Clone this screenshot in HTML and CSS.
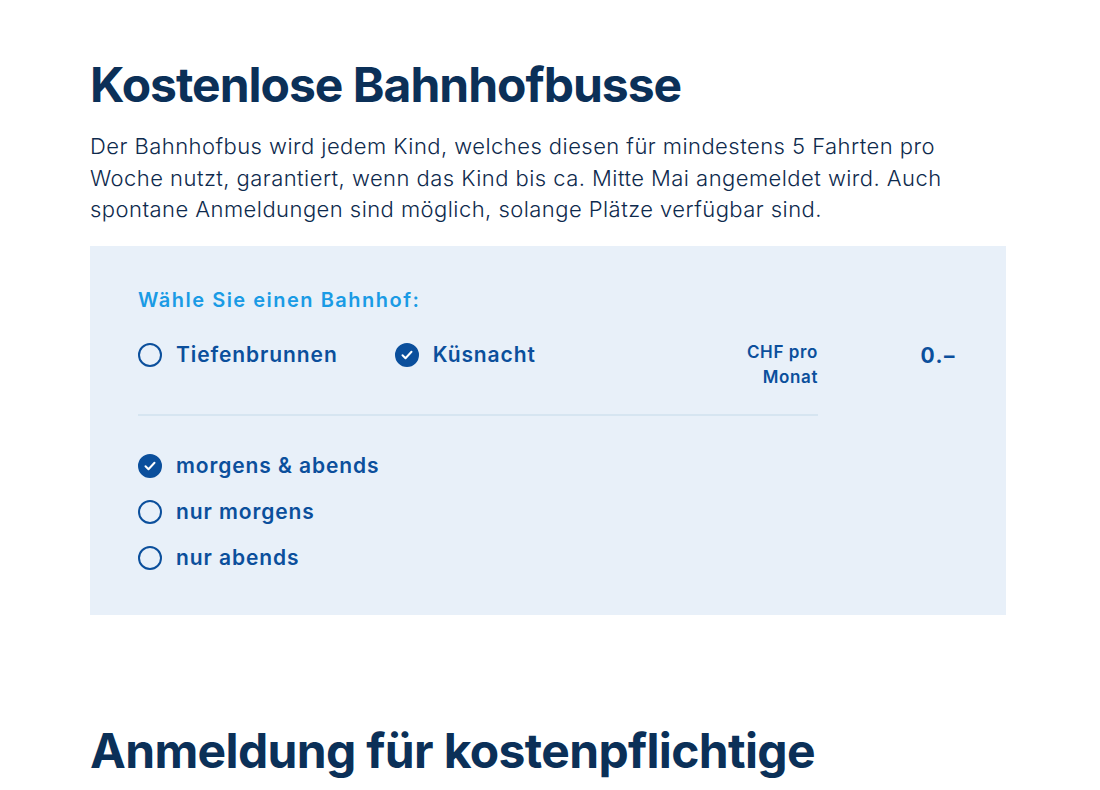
FILE: index.html
```html
<!DOCTYPE html>
<html lang="de">
<head>
  <meta charset="UTF-8">
  <meta name="viewport" content="width=device-width, initial-scale=1.0">
  <title>Bahnhofbusse</title>
  <link rel="stylesheet" href="styles.css">
</head>
<body>
  <div class="page">
    <h1 class="title">Kostenlose Bahnhofbusse</h1>
    <p class="intro">Der Bahnhofbus wird jedem Kind, welches diesen für mindestens 5 Fahrten pro Woche nutzt, garantiert, wenn das Kind bis ca. Mitte Mai angemeldet wird. Auch spontane Anmeldungen sind möglich, solange Plätze verfügbar sind.</p>

    <div class="station-box">
      <div class="box-main">
        <div class="box-label">Wähle Sie einen Bahnhof:</div>
        <div class="station-row">
          <div class="stations">
            <div class="option">
              <span class="mark"></span>
              <span>Tiefenbrunnen</span>
            </div>
            <div class="option">
              <span class="mark checked">
                <svg width="12" height="10" viewBox="0 0 12 10" fill="none"><path d="M1.5 5.2l3 3 6-6.4" stroke="#fff" stroke-width="2" stroke-linecap="round" stroke-linejoin="round"/></svg>
              </span>
              <span>Küsnacht</span>
            </div>
          </div>
          <div class="price-label">CHF pro<br>Monat</div>
        </div>
        <div class="divider"></div>
        <div class="times">
          <div class="option">
            <span class="mark checked">
              <svg width="12" height="10" viewBox="0 0 12 10" fill="none"><path d="M1.5 5.2l3 3 6-6.4" stroke="#fff" stroke-width="2" stroke-linecap="round" stroke-linejoin="round"/></svg>
            </span>
            <span>morgens &amp; abends</span>
          </div>
          <div class="option">
            <span class="mark"></span>
            <span>nur morgens</span>
          </div>
          <div class="option">
            <span class="mark"></span>
            <span>nur abends</span>
          </div>
        </div>
      </div>
      <div class="price-amount">0.–</div>
    </div>

    <h2 class="title second">Anmeldung für kostenpflichtige</h2>
  </div>
</body>
</html>
```

FILE: styles.css
```css
body {
  margin: 0;
  background: #ffffff;
  color: #0e2a4d;
  font-family: Inter, 'Noto Sans', sans-serif;
}

.page {
  width: 916px;
  padding: 57px 0 0 90px;
}

.title {
  margin: 0;
  font-size: 48px;
  line-height: 56px;
  font-weight: 700;
  letter-spacing: -1px;
  color: #0b3058;
}

.intro {
  width: 900px;
  margin: 18px 0 20px;
  font-size: 22px;
  line-height: 31.5px;
  font-weight: 300;
  letter-spacing: 0.45px;
  color: #0e2a4d;
}

.station-box {
  display: flex;
  justify-content: space-between;
  padding: 42px 50px 42px 48px;
  background: #e8f0f9;
}

.box-main {
  width: 680px;
}

.box-label {
  font-size: 20px;
  line-height: 24px;
  font-weight: 600;
  letter-spacing: 1.5px;
  color: #1a9be5;
  margin-bottom: 28px;
}

.station-row {
  display: flex;
  justify-content: space-between;
  align-items: flex-start;
}

.stations {
  display: flex;
  gap: 57px;
}

.option {
  display: flex;
  align-items: center;
  gap: 14px;
  height: 30px;
  font-size: 21px;
  font-weight: 600;
  letter-spacing: 0.9px;
  color: #0b4f9c;
}

.mark {
  width: 24px;
  height: 24px;
  box-sizing: border-box;
  border: 2.5px solid #0b4f9c;
  border-radius: 50%;
  display: flex;
  align-items: center;
  justify-content: center;
  flex-shrink: 0;
}

.mark.checked {
  background: #0b4f9c;
}

.price-label {
  text-align: right;
  font-size: 17px;
  line-height: 25px;
  font-weight: 600;
  letter-spacing: 0.6px;
  color: #0b4f9c;
}

.divider {
  height: 2px;
  margin: 24px 0 35px;
  background: #d6e5f1;
}

.times {
  display: flex;
  flex-direction: column;
  gap: 16px;
}

.price-amount {
  margin-top: 53px;
  font-size: 21px;
  line-height: 30px;
  font-weight: 700;
  letter-spacing: 1.5px;
  color: #0b4f9c;
}

.second {
  margin-top: 108px;
  letter-spacing: -0.65px;
}
```
